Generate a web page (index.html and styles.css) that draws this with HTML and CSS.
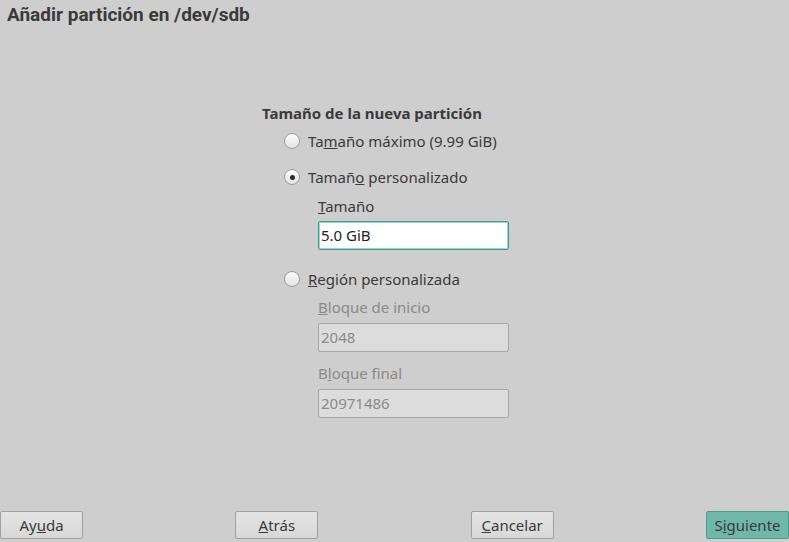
FILE: index.html
```html
<!DOCTYPE html>
<html lang="es">
<head>
<meta charset="utf-8">
<title>Añadir partición</title>
<link rel="stylesheet" href="styles.css">
</head>
<body>
<div class="window">
  <h1 class="title">Añadir partición en /dev/sdb</h1>
  <main class="content">
    <div class="form">
      <div class="heading">Tamaño de la nueva partición</div>
      <div class="radio-row first"><span class="radio"></span><span>Ta<u>m</u>año máximo (9.99 GiB)</span></div>
      <div class="radio-row second"><span class="radio checked"></span><span>Tamañ<u>o</u> personalizado</span></div>
      <div class="sub">
        <div class="label l1"><u>T</u>amaño</div>
        <div class="input active">5.0 GiB</div>
      </div>
      <div class="radio-row third"><span class="radio"></span><span><u>R</u>egión personalizada</span></div>
      <div class="sub disabled">
        <div class="label l2"><u>B</u>loque de inicio</div>
        <div class="input">2048</div>
        <div class="label l3">B<u>l</u>oque final</div>
        <div class="input">20971486</div>
      </div>
    </div>
  </main>
  <footer class="buttons">
    <button class="btn">Ay<u>u</u>da</button>
    <button class="btn"><u>A</u>trás</button>
    <button class="btn"><u>C</u>ancelar</button>
    <button class="btn primary">S<u>i</u>guiente</button>
  </footer>
</div>
</body>
</html>
```
FILE: styles.css
```css
html, body {
  margin: 0;
  padding: 0;
  background: #cecece;
}
body {
  font-family: "Noto Sans", "Open Sans", sans-serif;
  font-size: 15px;
  color: #3a3a3a;
}
.window {
  height: 542px;
  display: flex;
  flex-direction: column;
  overflow: hidden;
}
.title {
  font-family: Roboto, "Liberation Sans", sans-serif;
  font-weight: 700;
  font-size: 19px;
  line-height: 22px;
  margin: 4px 0 0 7px;
  color: #3a3a3a;
}
.content {
  flex: 1;
  display: flex;
}
.form {
  display: flex;
  flex-direction: column;
  padding-left: 262px;
  padding-top: 77px;
}
.heading {
  font-weight: 700;
  line-height: 20px;
}
.radio-row {
  display: flex;
  align-items: center;
  gap: 8px;
  line-height: 20px;
  height: 20px;
  padding-left: 22px;
}
.radio-row.first { margin-top: 8px; }
.radio-row.second { margin-top: 16px; }
.radio-row.third { margin-top: 19px; }
.radio {
  width: 16px;
  height: 16px;
  box-sizing: border-box;
  border-radius: 50%;
  border: 1px solid #9c9c9c;
  background: linear-gradient(#fbfbfb, #e4e4e4);
  position: relative;
}
.radio.checked::after {
  content: "";
  position: absolute;
  left: 4.5px;
  top: 4.5px;
  width: 5px;
  height: 5px;
  border-radius: 50%;
  background: #2a2a2a;
}
.sub {
  display: flex;
  flex-direction: column;
  padding-left: 56px;
}
.label {
  line-height: 20px;
}
.l1 { margin-top: 9px; }
.l2 { margin-top: 8px; }
.l3 { margin-top: 11px; }
.input {
  margin-top: 5px;
  width: 191px;
  height: 29px;
  box-sizing: border-box;
  border: 1px solid #a6a6a6;
  border-radius: 2px;
  background: #dcdcdc;
  padding-left: 2px;
  line-height: 27px;
  color: #8a8a8a;
}
.disabled .input { margin-top: 6px; }
.disabled .label { color: #8a8a8a; }
.input.active {
  background: #ffffff;
  border: 1px solid #3e9d8f;
  box-shadow: inset 0 0 0 1px #9fd6cc;
  color: #222222;
}
.buttons {
  display: flex;
  justify-content: space-between;
  padding-bottom: 3px;
}
.btn {
  width: 83px;
  height: 28px;
  box-sizing: border-box;
  border: 1px solid #a0a0a0;
  border-radius: 2px;
  background: linear-gradient(#e4e4e4, #d8d8d8);
  font-family: "Noto Sans", "Open Sans", sans-serif;
  font-size: 15px;
  color: #3a3a3a;
  padding: 0;
}
.btn.primary {
  background: #6fb7aa;
  border-color: #4b9b8c;
}
```
